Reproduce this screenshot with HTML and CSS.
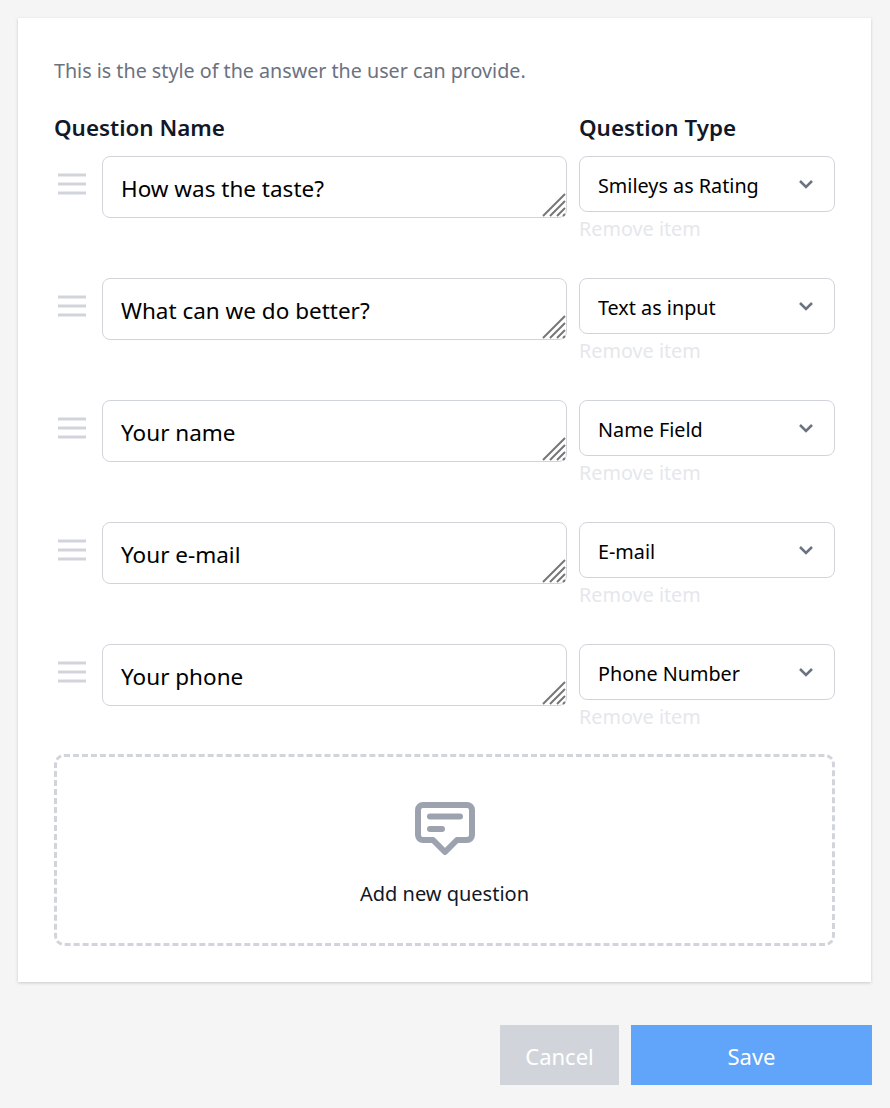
FILE: index.html
```html
<!DOCTYPE html>
<html lang="en">
<head>
    <meta charset="UTF-8">
    <meta name="viewport" content="width=device-width, initial-scale=1.0">
    <title>Edit Questions</title>
    <link rel="stylesheet" href="styles.css">
</head>
<body>
    <main class="card">
        <p class="hint">This is the style of the answer the user can provide.</p>
        <div class="question-head">
            <h3>Question Name</h3>
            <h3>Question Type</h3>
        </div>

        <div class="question">
            <svg class="handle" viewBox="0 0 28 24"><path d="M0 3h28M0 12h28M0 21h28"/></svg>
            <div class="name-field">
                <span class="name-input">How was the taste?</span>
                <svg class="grip" viewBox="0 0 24 24"><path d="M1 23 23 1M8 23 23 8M15 23l8-8M21 23l2-2"/></svg>
            </div>
            <div class="type-col">
                <div class="type-select"><span>Smileys as Rating</span><svg viewBox="0 0 16 10"><path d="M2 2l6 6 6-6"/></svg></div>
                <a class="remove" href="#">Remove item</a>
            </div>
        </div>

        <div class="question">
            <svg class="handle" viewBox="0 0 28 24"><path d="M0 3h28M0 12h28M0 21h28"/></svg>
            <div class="name-field">
                <span class="name-input">What can we do better?</span>
                <svg class="grip" viewBox="0 0 24 24"><path d="M1 23 23 1M8 23 23 8M15 23l8-8M21 23l2-2"/></svg>
            </div>
            <div class="type-col">
                <div class="type-select"><span>Text as input</span><svg viewBox="0 0 16 10"><path d="M2 2l6 6 6-6"/></svg></div>
                <a class="remove" href="#">Remove item</a>
            </div>
        </div>

        <div class="question">
            <svg class="handle" viewBox="0 0 28 24"><path d="M0 3h28M0 12h28M0 21h28"/></svg>
            <div class="name-field">
                <span class="name-input">Your name</span>
                <svg class="grip" viewBox="0 0 24 24"><path d="M1 23 23 1M8 23 23 8M15 23l8-8M21 23l2-2"/></svg>
            </div>
            <div class="type-col">
                <div class="type-select"><span>Name Field</span><svg viewBox="0 0 16 10"><path d="M2 2l6 6 6-6"/></svg></div>
                <a class="remove" href="#">Remove item</a>
            </div>
        </div>

        <div class="question">
            <svg class="handle" viewBox="0 0 28 24"><path d="M0 3h28M0 12h28M0 21h28"/></svg>
            <div class="name-field">
                <span class="name-input">Your e-mail</span>
                <svg class="grip" viewBox="0 0 24 24"><path d="M1 23 23 1M8 23 23 8M15 23l8-8M21 23l2-2"/></svg>
            </div>
            <div class="type-col">
                <div class="type-select"><span>E-mail</span><svg viewBox="0 0 16 10"><path d="M2 2l6 6 6-6"/></svg></div>
                <a class="remove" href="#">Remove item</a>
            </div>
        </div>

        <div class="question">
            <svg class="handle" viewBox="0 0 28 24"><path d="M0 3h28M0 12h28M0 21h28"/></svg>
            <div class="name-field">
                <span class="name-input">Your phone</span>
                <svg class="grip" viewBox="0 0 24 24"><path d="M1 23 23 1M8 23 23 8M15 23l8-8M21 23l2-2"/></svg>
            </div>
            <div class="type-col">
                <div class="type-select"><span>Phone Number</span><svg viewBox="0 0 16 10"><path d="M2 2l6 6 6-6"/></svg></div>
                <a class="remove" href="#">Remove item</a>
            </div>
        </div>

        <button class="add-question" type="button">
            <svg viewBox="0 0 60 54"><path class="bubble" d="M8 3h44a5 5 0 0 1 5 5v25a5 5 0 0 1-5 5H42L30 50 18 38H8a5 5 0 0 1-5-5V8a5 5 0 0 1 5-5Z"/><path class="lines" d="M15 14.500h30M15 27h12"/></svg>
            <span>Add new question</span>
        </button>
    </main>

    <footer class="actions">
        <button class="btn btn-cancel" type="button">Cancel</button>
        <button class="btn btn-save" type="button">Save</button>
    </footer>
</body>
</html>
```

FILE: styles.css
```css
:root {
    --bg-color: #f5f5f5;
    --border-color: #d1d5db;
    --text-color: #111827;
    --text-muted: #6b7280;
    --blue: #60a5fa;
}
* { box-sizing: border-box; }
body {
    font-family: "Noto Sans", "Open Sans", Arial, sans-serif;
    background-color: var(--bg-color);
    color: var(--text-color);
    margin: 0;
    padding: 18px 18px 0;
}
.card {
    background-color: #fff;
    width: 853px;
    height: 964px;
    padding: 36px;
    box-shadow: 0 1px 3px rgba(0, 0, 0, 0.18);
}
.hint { margin: 5px 0 0; height: 24px; line-height: 24px; font-size: 19.7px; color: var(--text-muted); }
.question-head { display: grid; grid-template-columns: 513px 256px; column-gap: 12px; margin-top: 29px; height: 44px; }
.question-head h3 { margin: 0; font-size: 22.4px; line-height: 32px; font-weight: 600; }
.question { display: flex; height: 122px; }
.handle { width: 28px; height: 24px; margin: 16px 16px 0 4px; flex: none; fill: none; stroke: var(--border-color); stroke-width: 3; }
.name-field {
    position: relative;
    flex: none;
    width: 465px;
    height: 62px;
    margin-right: 12px;
    padding: 0 18px;
    border: 1px solid var(--border-color);
    border-radius: 8px;
    display: flex;
    align-items: center;
}
.name-input { font-size: 22.5px; color: #000; position: relative; top: 1px; }
.grip { position: absolute; right: 0; bottom: 0; width: 24px; height: 24px; fill: none; stroke: #777; stroke-width: 2; }
.type-col { width: 256px; }
.type-select {
    height: 56px;
    border: 1px solid var(--border-color);
    border-radius: 8px;
    padding: 0 20px 0 18px;
    display: flex;
    align-items: center;
    justify-content: space-between;
    font-size: 19.8px;
    color: #000;
}
.type-select span { position: relative; top: 1px; }
.type-select svg { width: 16px; height: 10px; fill: none; stroke: var(--text-muted); stroke-width: 2.500; }
.remove { display: block; margin-top: 3px; font-size: 19.8px; line-height: 28px; color: #e5e7eb; text-decoration: none; }
.add-question {
    display: flex;
    flex-direction: column;
    align-items: center;
    width: 781px;
    height: 192px;
    margin-top: -12px;
    padding: 45px 0 0;
    background: none;
    border: 3px dashed var(--border-color);
    border-radius: 10px;
    font-family: inherit;
    font-size: 20px;
    color: var(--text-color);
}
.add-question svg { width: 60px; height: 54px; fill: none; }
.add-question span { margin-top: 24px; line-height: 28px; }
.bubble { stroke: #9ca3af; stroke-width: 6; stroke-linejoin: round; }
.lines { stroke: #9ca3af; stroke-width: 6; stroke-linecap: round; }
.actions { display: flex; justify-content: flex-end; gap: 12px; margin-top: 43px; }
.btn { height: 60px; border: 0; padding: 2px 0 0; color: #fff; font-family: inherit; font-size: 22px; }
.btn-cancel { width: 119px; background-color: var(--border-color); }
.btn-save { width: 241px; background-color: var(--blue); }
```
